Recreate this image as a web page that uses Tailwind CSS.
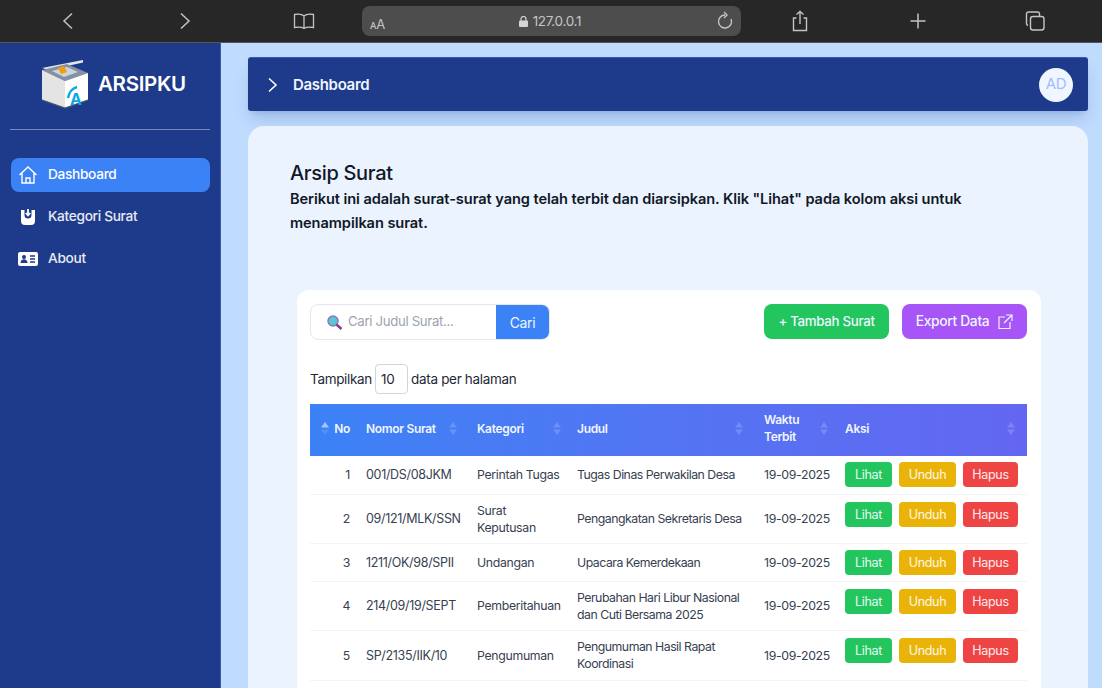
<!DOCTYPE html>
<html lang="id">
<head>
<meta charset="utf-8">
<title>Arsipku</title>
<script src="https://cdn.jsdelivr.net/npm/@tailwindcss/browser@4"></script>
</head>
<body class="h-[688px] w-[1102px] overflow-hidden bg-[#bfdbfe] font-['Inter','Liberation_Sans',sans-serif] tracking-[-0.02em]">
<div class="flex h-[43px] items-center border-b border-[#555] bg-[#272727] text-[#c4c4c4]">
  <svg class="ml-[58px] h-5 w-5" viewBox="0 0 20 20" fill="none" stroke="currentColor" stroke-width="1.5"><path d="M14 2.500 6 10l8 7.500"/></svg>
  <svg class="ml-[97px] h-5 w-5" viewBox="0 0 20 20" fill="none" stroke="currentColor" stroke-width="1.5"><path d="m6 2.500 8 7.500-8 7.500"/></svg>
  <svg class="ml-[98px] h-5 w-[22px]" viewBox="0 0 22 20" fill="none" stroke="currentColor" stroke-width="1.3"><path d="M11 5C9 3 5 3 1.500 3.500v13c3.500-.5 7.500-.5 9.500 1 2-1.500 6-1.500 9.500-1v-13C17 3 13 3 11 5Zm0 0v12.500"/></svg>
  <div class="ml-[47px] flex h-[30px] w-[379px] items-center justify-between rounded-lg bg-[#4d4d4d] pl-2 pr-[6px]">
    <span class="mt-[6px] text-[13px] leading-none">ᴀA</span>
    <span class="flex items-center gap-[5px] text-[13.500px]">
      <svg class="h-[11px] w-[9px]" viewBox="0 0 9 11" fill="#d4d4d4"><rect y="4.500" width="9" height="6.500" rx="1"/><path d="M2 5V3a2.500 2.500 0 0 1 5 0v2" fill="none" stroke="#d4d4d4" stroke-width="1.200"/></svg>
      127.0.0.1
    </span>
    <svg class="h-5 w-5" viewBox="0 0 20 20" fill="none" stroke="currentColor" stroke-width="1.400"><path d="M10 4a6.500 6.500 0 1 0 6 4"/><path d="M9 1l3 3-3 3"/></svg>
  </div>
  <svg class="ml-[49px] h-[22px] w-5" viewBox="0 0 20 22" fill="none" stroke="currentColor" stroke-width="1.400"><path d="M6.500 8H3.500v12.500h13V8h-3M10 14V1.500M6.500 4.500 10 1.500l3.500 3"/></svg>
  <svg class="ml-[98px] h-5 w-5" viewBox="0 0 20 20" fill="none" stroke="currentColor" stroke-width="1.500"><path d="M10 2.500v15M2.500 10h15"/></svg>
  <svg class="ml-[97px] h-5 w-5" viewBox="0 0 20 20" fill="none" stroke="currentColor" stroke-width="1.400"><rect x="5.500" y="5.500" width="13.500" height="13.500" rx="2.500"/><path d="M3 14.500a2 2 0 0 1-1.500-2V3a2 2 0 0 1 2-2h9a2 2 0 0 1 2 2v2"/></svg>
</div>
<div class="flex h-[645px]">
  <aside class="w-[221px] shrink-0 border-r border-[#3b5aa8] bg-[#1e3a8a] px-[10px]">
    <div class="flex h-[87px] items-center gap-[10px] border-b border-white/40 pb-1 pl-[31px]">
      <svg class="h-[50px] w-[47px]" viewBox="0 0 47 50">
        <path d="M1 9 42 1v2.500L8 11Z" fill="#e5e7eb"/>
        <path d="M1 11 26 5l21 9-23 8Z" fill="#8590a0"/>
        <path d="m11 12 15-4 11 5-14 5Z" fill="#cbd5e1"/>
        <path d="m17 9 6-2 3 6-6 2Z" fill="#f59e0b"/>
        <path d="M1 11l23 11v27L1 41Z" fill="#e4e4e4"/>
        <path d="m24 22 23-8v27l-23 8Z" fill="#fff"/>
        <path d="M1 41l23 8 23-8" fill="none" stroke="#475569" stroke-width="1.200"/>
        <path d="M27 39c1-6 5-10 9-11" fill="none" stroke="#0ea5e9" stroke-width="2.500"/>
        <text x="29" y="46" font-family="Inter" font-size="16" font-weight="700" fill="#0ea5e9">A</text>
      </svg>
      <span class="text-[20.500px] font-semibold text-white">ARSIPKU</span>
    </div>
    <nav class="mt-[28px] ml-[1px] flex flex-col gap-2 text-[13.700px] font-medium text-white/90">
      <a class="flex h-[34px] items-center gap-[10px] rounded-lg bg-[#3b82f6] px-2 text-white">
        <svg class="-ml-[1px] h-5 w-5" viewBox="0 0 20 20" fill="none" stroke="currentColor" stroke-width="1.400"><path d="M1.500 10 10 2l8.500 8M4 8v10h12V8M8 18v-5h4v5"/></svg><span class="mb-[2px]">Dashboard</span>
      </a>
      <a class="flex h-[34px] items-center gap-[10px] px-2">
        <svg class="-ml-[1px] h-5 w-5" viewBox="0 0 20 20"><path d="M3 3h3.500v5a3.500 3.500 0 0 0 7 0V3H17v11a4 4 0 0 1-4 4H7a4 4 0 0 1-4-4Z" fill="#fff"/><path d="M10 2v6M7.800 6 10 8.500 12.200 6" fill="none" stroke="#fff" stroke-width="1.800"/></svg><span class="mb-[2px]">Kategori Surat</span>
      </a>
      <a class="flex h-[34px] items-center gap-[10px] px-2">
        <svg class="-ml-[1px] h-5 w-5" viewBox="0 0 20 20"><rect y="3" width="20" height="14" rx="2" fill="#fff"/><circle cx="6" cy="8" r="2" fill="#1e3a8a"/><path d="M2.500 14c0-5 7-5 7 0Z" fill="#1e3a8a"/><path d="M12 7h5M12 10h5M12 13h5" stroke="#1e3a8a" stroke-width="1.300"/></svg><span class="mb-[2px]">About</span>
      </a>
    </nav>
  </aside>
  <main class="min-w-0 flex-1 pl-[27px] pr-[14px] pt-[14px]">
    <header class="flex h-[54px] items-center justify-between rounded-[3px] border-t border-[#3b5aa8] bg-[#1e3a8a] pl-4 pr-[15px] shadow-lg shadow-[#1e3a8a]/20">
      <div class="flex items-center gap-3 text-[15px] font-semibold text-[#eff6ff]">
        <svg class="h-4 w-[17px]" viewBox="0 0 17 16" fill="none" stroke="#fff" stroke-width="1.600"><path d="m5 1.500 7 6.500-7 6.500"/></svg>
        <span class="mt-[2px]">Dashboard</span>
      </div>
      <div class="flex h-[34px] w-[34px] items-center justify-center rounded-full bg-[#eff6ff] text-[15px] text-[#a5bcfc]">AD</div>
    </header>
    <section class="mt-[15px] h-[600px] rounded-t-2xl bg-[#ebf3ff] pl-[42px] pr-[47px] pt-[34px]">
      <h1 class="text-[20px] font-medium leading-[26px] text-[#111827]">Arsip Surat</h1>
      <p class="mt-[1px] max-w-[700px] text-[14.600px] font-semibold leading-[24px] tracking-[-0.005em] text-[#111827]">Berikut ini adalah surat-surat yang telah terbit dan diarsipkan. Klik "Lihat" pada kolom aksi untuk menampilkan surat.</p>
      <div class="ml-[7px] mt-[55px] rounded-t-xl bg-white pl-[13px] pr-[14px] pt-[14px]">
        <div class="flex items-start justify-between">
          <div class="flex h-9 w-[240px] overflow-hidden rounded-lg border border-gray-200">
            <div class="flex flex-1 items-center gap-[5px] pl-4 text-[13.200px] text-[#9ca3af]">
              <svg class="h-[15px] w-[16px]" viewBox="0 0 16 15"><circle cx="6" cy="6" r="5" fill="#5bc4d8" stroke="#8b7bb5" stroke-width="1.500"/><path d="m9.500 9.500 5 4.500" stroke="#8e3a8c" stroke-width="2.500"/></svg>
              Cari Judul Surat...
            </div>
            <div class="flex w-[53px] items-center justify-center bg-[#3b82f6] text-[14px] text-[#eff6ff]">Cari</div>
          </div>
          <div class="flex gap-[13px] font-medium text-[#eff6ff]">
            <a class="flex h-[35px] w-[125px] items-center justify-center rounded-lg bg-[#22c55e] text-[13.300px]">+ Tambah Surat</a>
            <a class="flex h-[35px] w-[125px] items-center justify-center gap-2 rounded-lg bg-[#a855f7] text-[13.800px]">Export Data
              <svg class="h-4 w-4" viewBox="0 0 16 16" fill="none" stroke="currentColor" stroke-width="1.200"><path d="M8 3H2v11.500h11V8M9 1h6v6M15 1 7 9"/></svg>
            </a>
          </div>
        </div>
        <div class="mt-6 flex h-[30px] items-center gap-[3px] text-[13.500px] text-[#1f2937]">
          Tampilkan
          <span class="flex h-[30px] w-[33px] items-center rounded border border-gray-300 pl-[5px]">10</span>
          data per halaman
        </div>
        <table class="mt-[10px] w-full table-fixed border-collapse text-[12.300px] text-[#374151]">
          <colgroup><col class="w-[48px]"><col class="w-[111px]"><col class="w-[100px]"><col class="w-[187px]"><col class="w-[81px]"><col></colgroup>
          <thead class="bg-gradient-to-r from-[#3b82f6] to-[#6366f1] text-left text-[12px] font-semibold leading-[17px] text-[#eff6ff]">
            <tr class="h-[52px]">
              <th class="px-2 pb-1 font-semibold"><div class="flex items-center justify-end gap-[5px]"><svg class="h-[15px] w-2" viewBox="0 0 8 15"><path d="M4 1 8 6.500H0Z" fill="#fff" fill-opacity=".55"/><path d="M4 14 8 8.500H0Z" fill="#fff" fill-opacity=".12"/></svg>No</div></th>
              <th class="px-2 pb-1 font-semibold"><div class="flex items-center justify-between">Nomor Surat<svg class="mr-1 h-[15px] w-2" viewBox="0 0 8 15" fill="#fff" fill-opacity=".18"><path d="M4 1 8 6.500H0ZM4 14 8 8.500H0Z"/></svg></div></th>
              <th class="px-2 pb-1 font-semibold"><div class="flex items-center justify-between">Kategori<svg class="h-[15px] w-2" viewBox="0 0 8 15" fill="#fff" fill-opacity=".18"><path d="M4 1 8 6.500H0ZM4 14 8 8.500H0Z"/></svg></div></th>
              <th class="px-2 pb-1 font-semibold"><div class="flex items-center justify-between">Judul<svg class="mr-[5px] h-[15px] w-2" viewBox="0 0 8 15" fill="#fff" fill-opacity=".18"><path d="M4 1 8 6.500H0ZM4 14 8 8.500H0Z"/></svg></div></th>
              <th class="px-2 pb-1 font-semibold"><div class="flex items-center justify-between"><span>Waktu<br>Terbit</span><svg class="mr-[1px] h-[15px] w-2" viewBox="0 0 8 15" fill="#fff" fill-opacity=".18"><path d="M4 1 8 6.500H0ZM4 14 8 8.500H0Z"/></svg></div></th>
              <th class="px-2 pb-1 font-semibold"><div class="flex items-center justify-between">Aksi<svg class="mr-[4px] h-[15px] w-2" viewBox="0 0 8 15" fill="#fff" fill-opacity=".18"><path d="M4 1 8 6.500H0ZM4 14 8 8.500H0Z"/></svg></div></th>
            </tr>
          </thead>
          <tbody class="leading-[17px]">
            <tr class="h-[38px] border-b border-gray-100">
              <td class="px-2 text-right">1</td><td class="px-2 text-[12.500px]">001/DS/08JKM</td><td class="px-2">Perintah Tugas</td><td class="px-2 tracking-[-0.04em]">Tugas Dinas Perwakilan Desa</td><td class="whitespace-nowrap px-2">19-09-2025</td>
              <td class="px-2 pt-[6px] align-top"><div class="flex gap-[7px] text-center text-[12.500px] leading-[25px] text-white/90"><a class="w-[47px] rounded bg-[#22c55e]">Lihat</a><a class="w-[57px] rounded bg-[#eab308]">Unduh</a><a class="w-[55px] rounded bg-[#ef4444]">Hapus</a></div></td>
            </tr>
            <tr class="h-[49px] border-b border-gray-100">
              <td class="px-2 text-right">2</td><td class="px-2 text-[12.500px]">09/121/MLK/SSN</td><td class="px-2">Surat Keputusan</td><td class="px-2 tracking-[-0.04em]">Pengangkatan Sekretaris Desa</td><td class="whitespace-nowrap px-2">19-09-2025</td>
              <td class="px-2 pt-[7px] align-top"><div class="flex gap-[7px] text-center text-[12.500px] leading-[25px] text-white/90"><a class="w-[47px] rounded bg-[#22c55e]">Lihat</a><a class="w-[57px] rounded bg-[#eab308]">Unduh</a><a class="w-[55px] rounded bg-[#ef4444]">Hapus</a></div></td>
            </tr>
            <tr class="h-[38px] border-b border-gray-100">
              <td class="px-2 text-right">3</td><td class="px-2 text-[12.500px]">1211/OK/98/SPII</td><td class="px-2">Undangan</td><td class="px-2 tracking-[-0.04em]">Upacara Kemerdekaan</td><td class="whitespace-nowrap px-2">19-09-2025</td>
              <td class="px-2 pt-[6px] align-top"><div class="flex gap-[7px] text-center text-[12.500px] leading-[25px] text-white/90"><a class="w-[47px] rounded bg-[#22c55e]">Lihat</a><a class="w-[57px] rounded bg-[#eab308]">Unduh</a><a class="w-[55px] rounded bg-[#ef4444]">Hapus</a></div></td>
            </tr>
            <tr class="h-[49px] border-b border-gray-100">
              <td class="px-2 text-right">4</td><td class="px-2 text-[12.500px]">214/09/19/SEPT</td><td class="px-2">Pemberitahuan</td><td class="px-2 tracking-[-0.04em]">Perubahan Hari Libur Nasional dan Cuti Bersama 2025</td><td class="whitespace-nowrap px-2">19-09-2025</td>
              <td class="px-2 pt-[7px] align-top"><div class="flex gap-[7px] text-center text-[12.500px] leading-[25px] text-white/90"><a class="w-[47px] rounded bg-[#22c55e]">Lihat</a><a class="w-[57px] rounded bg-[#eab308]">Unduh</a><a class="w-[55px] rounded bg-[#ef4444]">Hapus</a></div></td>
            </tr>
            <tr class="h-[50px] border-b border-gray-100">
              <td class="px-2 text-right">5</td><td class="px-2 text-[12.500px]">SP/2135/IIK/10</td><td class="px-2">Pengumuman</td><td class="px-2 tracking-[-0.04em]">Pengumuman Hasil Rapat Koordinasi</td><td class="whitespace-nowrap px-2">19-09-2025</td>
              <td class="px-2 pt-[7px] align-top"><div class="flex gap-[7px] text-center text-[12.500px] leading-[25px] text-white/90"><a class="w-[47px] rounded bg-[#22c55e]">Lihat</a><a class="w-[57px] rounded bg-[#eab308]">Unduh</a><a class="w-[55px] rounded bg-[#ef4444]">Hapus</a></div></td>
            </tr>
            <tr class="h-[38px]">
              <td></td><td></td><td></td><td></td><td></td>
              <td class="px-2 pt-[7px] align-top"><div class="flex gap-[7px]"><a class="h-6 w-[47px] rounded bg-[#22c55e]"></a><a class="h-6 w-[57px] rounded bg-[#eab308]"></a><a class="h-6 w-[55px] rounded bg-[#ef4444]"></a></div></td>
            </tr>
          </tbody>
        </table>
      </div>
    </section>
  </main>
</div>
</body>
</html>
